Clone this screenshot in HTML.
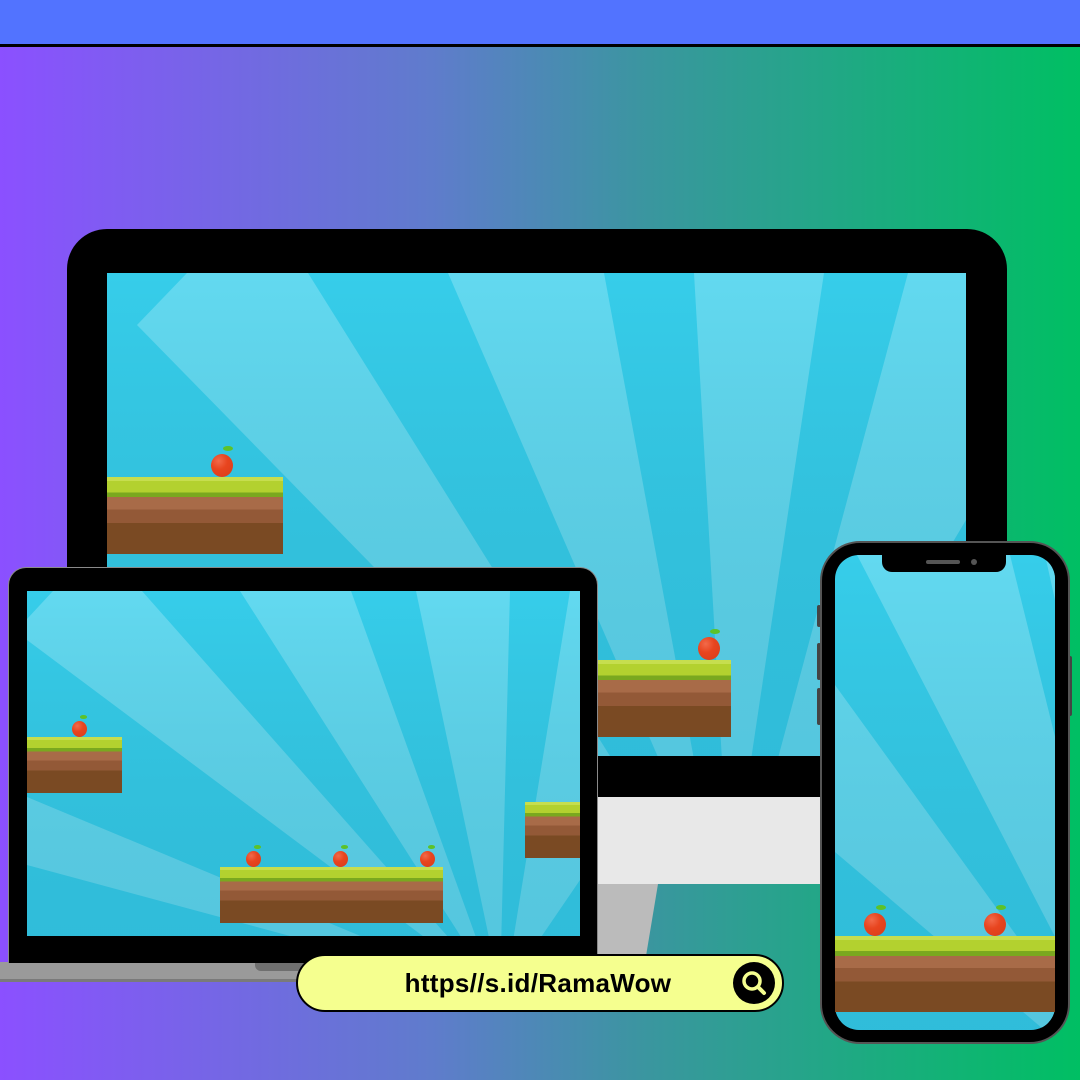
<!DOCTYPE html>
<html><head><meta charset="utf-8"><style>
*{margin:0;padding:0;box-sizing:border-box}
body{width:1080px;height:1080px;position:relative;overflow:hidden;background:linear-gradient(90deg,#8b50ff 0%,#5f7ccc 40%,#3a969f 60%,#00bf63 100%);font-family:"Liberation Sans",sans-serif}
.abs{position:absolute}
.plat{position:absolute;background:linear-gradient(180deg,#c6de4f 0,#c6de4f 5%,#b3d12f 5%,#b3d12f 20%,#7aa81f 20%,#7aa81f 26%,#a86b48 26%,#a86b48 42%,#935937 42%,#935937 60%,#7a4a23 60%)}
.apple{position:absolute;border-radius:50%;background:radial-gradient(circle at 35% 30%,#f26a4a 0,#e8451f 40%,#d83c1a 100%)}
.apple:after{content:"";position:absolute;left:55%;top:-35%;width:45%;height:22%;background:#5cc22a;border-radius:50%}
svg{position:absolute;left:0;top:0}
</style></head><body>
<div class="abs" style="left:0;top:0;width:1080px;height:44px;background:#5273ff"></div>
<div class="abs" style="left:0;top:44px;width:1080px;height:3px;background:#000"></div>

<!-- monitor -->
<div class="abs" style="left:598px;top:884px;width:60px;height:72px;background:#bbbbbb;clip-path:polygon(0 0,100% 0,80% 100%,0 100%)"></div>
<div class="abs" style="left:67px;top:229px;width:940px;height:568px;background:#000;border-radius:40px 40px 0 0"></div>
<div class="abs" style="left:67px;top:797px;width:753px;height:87px;background:#e8e8e8"></div>
<div class="abs" style="left:107px;top:273px;width:859px;height:483px;overflow:hidden;background:#36cdea">
<svg width="859" height="483" viewBox="107 273 859 483">
<defs><linearGradient id="g1" x1="0" y1="0" x2="0" y2="1"><stop offset="0" stop-color="#000" stop-opacity="0"/><stop offset="1" stop-color="#0a6080" stop-opacity="0.15"/></linearGradient></defs>
<g fill="#62d9f0">
<polygon points="187,273 308,273 700,900 137,325"/>
<polygon points="448,273 604,273 720,900"/>
<polygon points="694,273 824,273 730,900"/>
<polygon points="908,273 966,273 966,520 740,900"/>
<polygon points="107,610 107,760 300,760"/>
</g>
<rect x="107" y="273" width="859" height="483" fill="url(#g1)"/>
</svg>
</div>
<div class="plat" style="left:107px;top:477px;width:176px;height:77px"></div>
<div class="apple" style="left:211px;top:454px;width:22px;height:23px"></div>
<div class="plat" style="left:598px;top:660px;width:133px;height:77px"></div>
<div class="apple" style="left:698px;top:637px;width:22px;height:23px"></div>

<!-- laptop -->
<div class="abs" style="left:0;top:962px;width:600px;height:20px;background:#9a9a9a;border-bottom:3px solid #7a7a7a"></div>
<div class="abs" style="left:255px;top:962px;width:50px;height:9px;background:#6f6f6f;border-radius:0 0 6px 6px"></div>
<div class="abs" style="left:8px;top:567px;width:590px;height:396px;background:#000;border:1.5px solid #8a8a8a;border-bottom:none;border-radius:18px 18px 0 0"></div>
<div class="abs" style="left:27px;top:591px;width:553px;height:345px;overflow:hidden;background:#36cdea">
<svg width="553" height="345" viewBox="27 591 553 345">
<defs><linearGradient id="g2" x1="0" y1="0" x2="0" y2="1"><stop offset="0" stop-color="#000" stop-opacity="0"/><stop offset="1" stop-color="#0a6080" stop-opacity="0.15"/></linearGradient></defs>
<g fill="#62d9f0">
<polygon points="27,619 53,591 142,591 495,990 27,640"/>
<polygon points="240,591 351,591 495,990"/>
<polygon points="416,591 510,591 500,990"/>
<polygon points="570,591 580,591 580,880 505,990"/>
<polygon points="27,797 27,865 490,990"/>
</g>
<rect x="27" y="591" width="553" height="345" fill="url(#g2)"/>
</svg>
</div>
<div class="plat" style="left:27px;top:737px;width:95px;height:56px"></div>
<div class="apple" style="left:72px;top:721px;width:15px;height:16px"></div>
<div class="plat" style="left:220px;top:867px;width:223px;height:56px"></div>
<div class="apple" style="left:246px;top:851px;width:15px;height:16px"></div>
<div class="apple" style="left:333px;top:851px;width:15px;height:16px"></div>
<div class="apple" style="left:420px;top:851px;width:15px;height:16px"></div>
<div class="plat" style="left:525px;top:802px;width:55px;height:56px"></div>

<!-- phone -->
<div class="abs" style="left:817px;top:605px;width:4px;height:22px;background:#444;border-radius:2px"></div>
<div class="abs" style="left:817px;top:643px;width:4px;height:37px;background:#444;border-radius:2px"></div>
<div class="abs" style="left:817px;top:688px;width:4px;height:37px;background:#444;border-radius:2px"></div>
<div class="abs" style="left:1068px;top:656px;width:4px;height:60px;background:#444;border-radius:2px"></div>
<div class="abs" style="left:820px;top:541px;width:250px;height:503px;background:#000;border:2.5px solid #555;border-radius:40px"></div>
<div class="abs" style="left:835px;top:555px;width:220px;height:475px;overflow:hidden;background:#36cdea;border-radius:24px">
<svg width="220" height="475" viewBox="835 555 220 475">
<defs><linearGradient id="g3" x1="0" y1="0" x2="0" y2="1"><stop offset="0" stop-color="#000" stop-opacity="0"/><stop offset="1" stop-color="#0a6080" stop-opacity="0.15"/></linearGradient></defs>
<g fill="#62d9f0">
<polygon points="857,555 1010,555 1150,1120"/>
<polygon points="835,685 835,852 1150,1120"/>
<polygon points="1045,555 1055,555 1055,600"/>
</g>
<rect x="835" y="555" width="220" height="475" fill="url(#g3)"/>
</svg>
</div>
<div class="abs" style="left:882px;top:553px;width:124px;height:19px;background:#000;border-radius:0 0 10px 10px"></div>
<div class="abs" style="left:926px;top:560px;width:34px;height:4px;background:#555;border-radius:2px"></div>
<div class="abs" style="left:971px;top:559px;width:6px;height:6px;background:#555;border-radius:50%"></div>
<div class="plat" style="left:835px;top:936px;width:220px;height:76px"></div>
<div class="apple" style="left:864px;top:913px;width:22px;height:23px"></div>
<div class="apple" style="left:984px;top:913px;width:22px;height:23px"></div>

<!-- url pill -->
<div class="abs" style="left:296px;top:954px;width:488px;height:58px;background:#f5ff8f;border:2px solid #000;border-radius:29px"></div>
<div class="abs" style="left:296px;top:954px;width:484px;height:58px;line-height:58px;text-align:center;font-size:26px;font-weight:bold;color:#000;letter-spacing:0.3px">https//s.id/RamaWow</div>
<div class="abs" style="left:733px;top:962px;width:42px;height:42px;background:#000;border-radius:50%"></div>
<svg class="abs" style="left:733px;top:962px" width="42" height="42" viewBox="0 0 42 42"><circle cx="19" cy="19" r="8" fill="none" stroke="#f5ff8f" stroke-width="3.5"/><line x1="25" y1="25" x2="31" y2="31" stroke="#f5ff8f" stroke-width="4" stroke-linecap="round"/></svg>
</body></html>
